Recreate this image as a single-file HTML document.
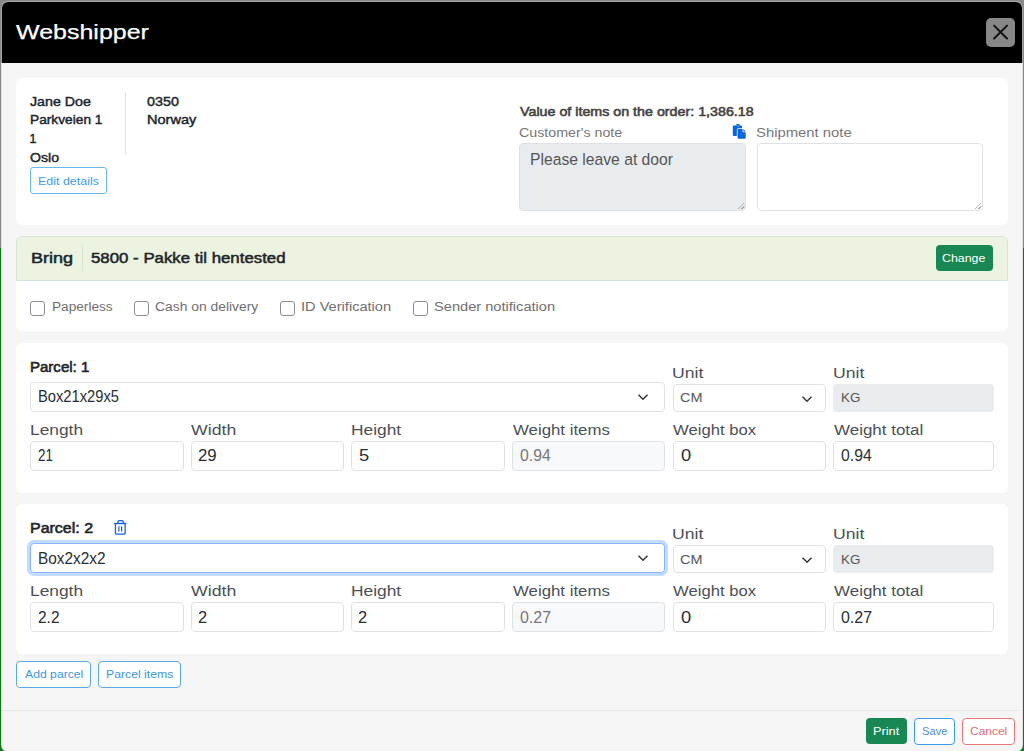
<!DOCTYPE html>
<html><head><meta charset="utf-8"><style>
html,body{margin:0;padding:0;}
body{width:1024px;height:751px;overflow:hidden;position:relative;background:#888;font-family:"Liberation Sans",sans-serif;}
.t{position:absolute;white-space:nowrap;line-height:0;height:0;transform-origin:0 0;}
.b{position:absolute;}
#gl{position:absolute;left:0;top:248px;width:1px;height:503px;background:#0b7a12;}
#gr{position:absolute;left:1023px;top:248px;width:1px;height:503px;background:#0b7a12;}
#gb{position:absolute;left:0;top:740px;width:1024px;height:11px;background:#0b7a12;}
#mo{position:absolute;left:1px;top:1px;width:1022px;height:751px;border-radius:7px;background:linear-gradient(#a6a6a6 0,#a6a6a6 62px,#e0e0e0 62px);}
#mi{position:absolute;left:1px;top:1px;width:1020px;height:749px;border-radius:6px;background:#f5f5f5;overflow:hidden;}
#hd{position:absolute;left:0;top:0;width:1020px;height:61px;background:#000;}
#pg{position:absolute;left:-2px;top:-2px;width:1024px;height:751px;}
</style></head><body>
<div id="gl"></div><div id="gr"></div><div id="gb"></div>
<div id="mo"><div id="mi"><div id="hd"></div><div id="pg">
<div class="t" style="left:16.47px;top:32.09px;font-size:21.09px;color:#fff;-webkit-text-stroke:0.25px #fff;transform:scaleX(1.1857);">Webshipper</div>
<div class="b" style="left:986px;top:18px;width:29px;height:29px;background:#878787;border-radius:5px;"></div>
<svg class="b" style="left:986px;top:18px" width="29" height="29" viewBox="0 0 29 29"><path d="M8.1 7.6L21 20.5M21 7.6L8.1 20.5" stroke="#111" stroke-width="2" stroke-linecap="round"/></svg>
<div class="b" style="left:16px;top:78px;width:992px;height:147px;background:#fff;border-radius:6px;"></div>
<div class="t" style="left:30.19px;top:101.54px;font-size:12.29px;color:#212529;-webkit-text-stroke:0.42px #212529;transform:scaleX(1.1588);">Jane Doe</div>
<div class="t" style="left:30.30px;top:120.34px;font-size:12.29px;color:#212529;-webkit-text-stroke:0.42px #212529;transform:scaleX(1.1175);">Parkveien 1</div>
<div class="t" style="left:29.38px;top:139.24px;font-size:12.29px;color:#212529;-webkit-text-stroke:0.42px #212529;transform:scaleX(1.0000);">1</div>
<div class="t" style="left:30.16px;top:157.54px;font-size:12.29px;color:#212529;-webkit-text-stroke:0.42px #212529;transform:scaleX(1.1482);">Oslo</div>
<div class="t" style="left:146.83px;top:101.54px;font-size:12.29px;color:#212529;-webkit-text-stroke:0.42px #212529;transform:scaleX(1.1694);">0350</div>
<div class="t" style="left:147.14px;top:120.34px;font-size:12.29px;color:#212529;-webkit-text-stroke:0.42px #212529;transform:scaleX(1.1824);">Norway</div>
<div class="b" style="left:125px;top:92px;width:1px;height:63px;background:#dee2e6;"></div>
<div class="b" style="left:30px;top:167px;width:77px;height:27px;border:1px solid #6ab8ec;border-radius:3px;box-sizing:border-box;"></div>
<div class="t" style="left:38.00px;top:180.78px;font-size:11.59px;color:#3d9de6;transform:scaleX(1.0749);">Edit details</div>
<div class="t" style="left:519.73px;top:112.25px;font-size:12.85px;color:#444;-webkit-text-stroke:0.58px #444;transform:scaleX(1.1106);">Value of items on the order: 1,386.18</div>
<div class="t" style="left:518.99px;top:132.60px;font-size:12.71px;color:#777;transform:scaleX(1.1206);">Customer's note</div>
<div class="t" style="left:755.63px;top:132.60px;font-size:12.71px;color:#777;transform:scaleX(1.1678);">Shipment note</div>
<svg class="b" style="left:732px;top:124px" width="15" height="16" viewBox="0 0 15 16"><path d="M1.8 1.5H4.3A1.7 1.7 0 0 1 7.7 1.5H9A1 1 0 0 1 10 2.5V4.3H6.3A1.5 1.5 0 0 0 4.8 5.8V12H1.8A1 1 0 0 1 0.8 11V2.5A1 1 0 0 1 1.8 1.5Z" fill="#0a64dc"/><circle cx="6" cy="2" r="0.6" fill="#fff"/><path d="M5.6 5.1H10.6V8.3H13.7V13.7A1 1 0 0 1 12.7 14.7H6.6A1 1 0 0 1 5.6 13.7Z" fill="#0a64dc"/><path d="M11.4 5.1L13.7 7.5H11.4Z" fill="#0a64dc"/></svg>
<div class="b" style="left:519px;top:143px;width:227px;height:68px;background:#e9ecef;border:1px solid #dee2e6;border-radius:4px;box-sizing:border-box;"></div>
<div class="t" style="left:530.24px;top:159.68px;font-size:15.92px;color:#555;transform:scaleX(0.9860);">Please leave at door</div>
<div class="b" style="left:757px;top:143px;width:226px;height:68px;background:#fff;border:1px solid #dee2e6;border-radius:4px;box-sizing:border-box;"></div>
<svg class="b" style="left:737px;top:202px" width="8" height="8" viewBox="0 0 8 8"><path d="M7 1L1 7" stroke="#aaa" stroke-width="0.9"/><path d="M7 4.5L4.5 7" stroke="#555" stroke-width="1"/></svg>
<svg class="b" style="left:974px;top:202px" width="8" height="8" viewBox="0 0 8 8"><path d="M7 1L1 7" stroke="#aaa" stroke-width="0.9"/><path d="M7 4.5L4.5 7" stroke="#555" stroke-width="1"/></svg>
<div class="b" style="left:16px;top:236px;width:992px;height:95px;background:#fff;border-radius:6px;"></div>
<div class="b" style="left:16px;top:236px;width:992px;height:45px;background:#ecf4e1;border:1px solid #d3e7d9;border-radius:6px 6px 0 0;box-sizing:border-box;"></div>
<div class="t" style="left:31.16px;top:257.72px;font-size:14.94px;color:#212529;-webkit-text-stroke:0.51px #212529;transform:scaleX(1.2069);">Bring</div>
<div class="b" style="left:82px;top:246px;width:1px;height:25px;background:#d5e3d0;"></div>
<div class="t" style="left:90.53px;top:257.72px;font-size:14.94px;color:#212529;-webkit-text-stroke:0.51px #212529;transform:scaleX(1.1263);">5800 - Pakke til hentested</div>
<div class="b" style="left:936px;top:245px;width:57px;height:26px;background:#198754;border-radius:4px;"></div>
<div class="t" style="left:942.38px;top:257.88px;font-size:11.59px;color:#fff;transform:scaleX(1.0691);">Change</div>
<div class="b" style="left:30px;top:301px;width:15px;height:15px;border:1px solid #8d8d8d;border-radius:3px;box-sizing:border-box;background:#fff;"></div>
<div class="t" style="left:51.81px;top:307.25px;font-size:12.85px;color:#6f6f6f;transform:scaleX(1.0622);">Paperless</div>
<div class="b" style="left:134px;top:301px;width:15px;height:15px;border:1px solid #8d8d8d;border-radius:3px;box-sizing:border-box;background:#fff;"></div>
<div class="t" style="left:155.21px;top:307.25px;font-size:12.85px;color:#6f6f6f;transform:scaleX(1.0790);">Cash on delivery</div>
<div class="b" style="left:280px;top:301px;width:15px;height:15px;border:1px solid #8d8d8d;border-radius:3px;box-sizing:border-box;background:#fff;"></div>
<div class="t" style="left:300.88px;top:307.25px;font-size:12.85px;color:#6f6f6f;transform:scaleX(1.1373);">ID Verification</div>
<div class="b" style="left:413px;top:301px;width:15px;height:15px;border:1px solid #8d8d8d;border-radius:3px;box-sizing:border-box;background:#fff;"></div>
<div class="t" style="left:434.04px;top:307.25px;font-size:12.85px;color:#6f6f6f;transform:scaleX(1.1383);">Sender notification</div>
<div class="b" style="left:16px;top:342.6px;width:992px;height:150.0px;background:#fff;border-radius:6px;"></div>
<div class="t" style="left:30.10px;top:366.93px;font-size:15.22px;color:#212529;-webkit-text-stroke:0.61px #212529;transform:scaleX(0.9870);">Parcel: 1</div>
<div class="b" style="left:30px;top:382px;width:635px;height:30px;border:1px solid #dee2e6;border-radius:4px;box-sizing:border-box;background:#fff;"></div>
<div class="t" style="left:38.42px;top:397.13px;font-size:15.78px;color:#2a2e33;transform:scaleX(0.9331);">Box21x29x5</div>
<svg class="b" style="left:637px;top:393px" width="12" height="8" viewBox="0 0 12 8"><path d="M1.5 1.8L6 6.2L10.5 1.8" stroke="#343a40" stroke-width="1.6" fill="none"/></svg>
<div class="t" style="left:671.78px;top:372.93px;font-size:15.22px;color:#4a4f54;transform:scaleX(1.1587);">Unit</div>
<div class="t" style="left:832.58px;top:372.93px;font-size:15.22px;color:#4a4f54;transform:scaleX(1.1587);">Unit</div>
<div class="b" style="left:673px;top:384px;width:153px;height:28px;border:1px solid #dee2e6;border-radius:4px;box-sizing:border-box;background:#fff;"></div>
<div class="t" style="left:679.78px;top:398.25px;font-size:13.13px;color:#555;transform:scaleX(1.0996);">CM</div>
<svg class="b" style="left:801px;top:395px" width="12" height="8" viewBox="0 0 12 8"><path d="M1.5 1.8L6 6.2L10.5 1.8" stroke="#343a40" stroke-width="1.6" fill="none"/></svg>
<div class="b" style="left:833px;top:384px;width:161px;height:28px;background:#e9ecef;border-radius:4px;"></div>
<div class="t" style="left:840.63px;top:398.35px;font-size:13.13px;color:#555;transform:scaleX(1.0215);">KG</div>
<div class="t" style="left:30.01px;top:429.57px;font-size:15.08px;color:#4b5055;transform:scaleX(1.1508);">Length</div>
<div class="b" style="left:30px;top:441px;width:154px;height:30px;border:1px solid #dee2e6;border-radius:4px;box-sizing:border-box;background:#fff;"></div>
<div class="t" style="left:37.63px;top:455.43px;font-size:16.06px;color:#2a2e33;transform:scaleX(0.8342);">21</div>
<div class="t" style="left:191.16px;top:429.57px;font-size:15.08px;color:#4b5055;transform:scaleX(1.1739);">Width</div>
<div class="b" style="left:191px;top:441px;width:153px;height:30px;border:1px solid #dee2e6;border-radius:4px;box-sizing:border-box;background:#fff;"></div>
<div class="t" style="left:198.46px;top:455.43px;font-size:16.06px;color:#2a2e33;transform:scaleX(1.0428);">29</div>
<div class="t" style="left:350.51px;top:429.57px;font-size:15.08px;color:#4b5055;transform:scaleX(1.1510);">Height</div>
<div class="b" style="left:351px;top:441px;width:154px;height:30px;border:1px solid #dee2e6;border-radius:4px;box-sizing:border-box;background:#fff;"></div>
<div class="t" style="left:358.57px;top:455.43px;font-size:16.06px;color:#2a2e33;transform:scaleX(1.1404);">5</div>
<div class="t" style="left:512.72px;top:429.57px;font-size:15.08px;color:#4b5055;transform:scaleX(1.1150);">Weight items</div>
<div class="b" style="left:512px;top:441px;width:153px;height:30px;border:1px solid #dee2e6;border-radius:4px;box-sizing:border-box;background:#f8f9fa;"></div>
<div class="t" style="left:519.67px;top:455.43px;font-size:16.06px;color:#777;transform:scaleX(0.9829);">0.94</div>
<div class="t" style="left:672.72px;top:429.57px;font-size:15.08px;color:#4b5055;transform:scaleX(1.1045);">Weight box</div>
<div class="b" style="left:673px;top:441px;width:153px;height:30px;border:1px solid #dee2e6;border-radius:4px;box-sizing:border-box;background:#fff;"></div>
<div class="t" style="left:680.57px;top:455.43px;font-size:16.06px;color:#2a2e33;transform:scaleX(1.1414);">0</div>
<div class="t" style="left:833.67px;top:429.57px;font-size:15.08px;color:#4b5055;transform:scaleX(1.1254);">Weight total</div>
<div class="b" style="left:833px;top:441px;width:161px;height:30px;border:1px solid #dee2e6;border-radius:4px;box-sizing:border-box;background:#fff;"></div>
<div class="t" style="left:840.67px;top:455.43px;font-size:16.06px;color:#2a2e33;transform:scaleX(0.9829);">0.94</div>
<div class="b" style="left:16px;top:504.0px;width:992px;height:150.0px;background:#fff;border-radius:6px;"></div>
<div class="t" style="left:30.02px;top:528.33px;font-size:15.22px;color:#212529;-webkit-text-stroke:0.61px #212529;transform:scaleX(1.0503);">Parcel: 2</div>
<div class="b" style="left:30px;top:543.4px;width:635px;height:30.0px;border:1px solid #86b7fe;box-shadow:0 0 0 3px #c2dbfe;border-radius:4px;box-sizing:border-box;background:#fff;"></div>
<div class="t" style="left:38.37px;top:558.53px;font-size:15.78px;color:#2a2e33;transform:scaleX(0.9757);">Box2x2x2</div>
<svg class="b" style="left:637px;top:554.4px" width="12" height="8" viewBox="0 0 12 8"><path d="M1.5 1.8L6 6.2L10.5 1.8" stroke="#343a40" stroke-width="1.6" fill="none"/></svg>
<div class="t" style="left:671.78px;top:534.33px;font-size:15.22px;color:#4a4f54;transform:scaleX(1.1587);">Unit</div>
<div class="t" style="left:832.58px;top:534.33px;font-size:15.22px;color:#4a4f54;transform:scaleX(1.1587);">Unit</div>
<div class="b" style="left:673px;top:545.4px;width:153px;height:28.0px;border:1px solid #dee2e6;border-radius:4px;box-sizing:border-box;background:#fff;"></div>
<div class="t" style="left:679.78px;top:559.65px;font-size:13.13px;color:#555;transform:scaleX(1.0996);">CM</div>
<svg class="b" style="left:801px;top:556.4px" width="12" height="8" viewBox="0 0 12 8"><path d="M1.5 1.8L6 6.2L10.5 1.8" stroke="#343a40" stroke-width="1.6" fill="none"/></svg>
<div class="b" style="left:833px;top:545.4px;width:161px;height:28.0px;background:#e9ecef;border-radius:4px;"></div>
<div class="t" style="left:840.63px;top:559.75px;font-size:13.13px;color:#555;transform:scaleX(1.0215);">KG</div>
<div class="t" style="left:30.01px;top:590.97px;font-size:15.08px;color:#4b5055;transform:scaleX(1.1508);">Length</div>
<div class="b" style="left:30px;top:602.4px;width:154px;height:30.0px;border:1px solid #dee2e6;border-radius:4px;box-sizing:border-box;background:#fff;"></div>
<div class="t" style="left:37.52px;top:616.83px;font-size:16.06px;color:#2a2e33;transform:scaleX(0.9653);">2.2</div>
<div class="t" style="left:191.16px;top:590.97px;font-size:15.08px;color:#4b5055;transform:scaleX(1.1739);">Width</div>
<div class="b" style="left:191px;top:602.4px;width:153px;height:30.0px;border:1px solid #dee2e6;border-radius:4px;box-sizing:border-box;background:#fff;"></div>
<div class="t" style="left:198.48px;top:616.83px;font-size:16.06px;color:#2a2e33;transform:scaleX(1.0263);">2</div>
<div class="t" style="left:350.51px;top:590.97px;font-size:15.08px;color:#4b5055;transform:scaleX(1.1510);">Height</div>
<div class="b" style="left:351px;top:602.4px;width:154px;height:30.0px;border:1px solid #dee2e6;border-radius:4px;box-sizing:border-box;background:#fff;"></div>
<div class="t" style="left:358.48px;top:616.83px;font-size:16.06px;color:#2a2e33;transform:scaleX(1.0263);">2</div>
<div class="t" style="left:512.72px;top:590.97px;font-size:15.08px;color:#4b5055;transform:scaleX(1.1150);">Weight items</div>
<div class="b" style="left:512px;top:602.4px;width:153px;height:30.0px;border:1px solid #dee2e6;border-radius:4px;box-sizing:border-box;background:#f8f9fa;"></div>
<div class="t" style="left:519.66px;top:616.83px;font-size:16.06px;color:#777;transform:scaleX(0.9935);">0.27</div>
<div class="t" style="left:672.72px;top:590.97px;font-size:15.08px;color:#4b5055;transform:scaleX(1.1045);">Weight box</div>
<div class="b" style="left:673px;top:602.4px;width:153px;height:30.0px;border:1px solid #dee2e6;border-radius:4px;box-sizing:border-box;background:#fff;"></div>
<div class="t" style="left:680.57px;top:616.83px;font-size:16.06px;color:#2a2e33;transform:scaleX(1.1414);">0</div>
<div class="t" style="left:833.67px;top:590.97px;font-size:15.08px;color:#4b5055;transform:scaleX(1.1254);">Weight total</div>
<div class="b" style="left:833px;top:602.4px;width:161px;height:30.0px;border:1px solid #dee2e6;border-radius:4px;box-sizing:border-box;background:#fff;"></div>
<div class="t" style="left:840.66px;top:616.83px;font-size:16.06px;color:#2a2e33;transform:scaleX(0.9935);">0.27</div>
<svg class="b" style="left:113px;top:520px" width="15" height="16" viewBox="0 0 15 16"><path d="M4.9 3V1.9a1.2 1.2 0 0 1 1.2-1.2h2.9a1.2 1.2 0 0 1 1.2 1.2V3" stroke="#1565d8" stroke-width="1.3" fill="none"/><path d="M1.75 3.4h11" stroke="#1565d8" stroke-width="1.5" stroke-linecap="round"/><path d="M2.45 4v9a1.05 1.05 0 0 0 1.05 1.05h7.6a1.05 1.05 0 0 0 1.05-1.05V4" stroke="#1565d8" stroke-width="1.3" fill="none"/><path d="M5.9 6.2v5.4M8.6 6.2v5.4" stroke="#1565d8" stroke-width="1.2"/></svg>
<div class="b" style="left:16px;top:661px;width:75px;height:27px;border:1px solid #5aaae6;border-radius:4px;box-sizing:border-box;background:#fff;"></div>
<div class="t" style="left:24.80px;top:674.48px;font-size:11.59px;color:#3d97dc;transform:scaleX(1.0538);">Add parcel</div>
<div class="b" style="left:98px;top:661px;width:83px;height:27px;border:1px solid #5aaae6;border-radius:4px;box-sizing:border-box;background:#fff;"></div>
<div class="t" style="left:105.62px;top:674.48px;font-size:11.59px;color:#3d97dc;transform:scaleX(1.0557);">Parcel items</div>
<div class="b" style="left:2px;top:710px;width:1017px;height:1px;background:#e3e5e8;"></div>
<div class="b" style="left:866px;top:718px;width:41px;height:26px;background:#198754;border-radius:4px;"></div>
<div class="t" style="left:873.08px;top:731.18px;font-size:11.59px;color:#fff;transform:scaleX(1.1035);">Print</div>
<div class="b" style="left:914px;top:718px;width:41px;height:27px;border:1px solid #3d9be9;border-radius:4px;box-sizing:border-box;background:#fff;"></div>
<div class="t" style="left:921.70px;top:731.18px;font-size:11.59px;color:#4a90e2;transform:scaleX(0.9651);">Save</div>
<div class="b" style="left:962px;top:718px;width:53px;height:27px;border:1px solid #e87878;border-radius:4px;box-sizing:border-box;background:#fff;"></div>
<div class="t" style="left:970.00px;top:731.18px;font-size:11.59px;color:#e06c75;transform:scaleX(1.0340);">Cancel</div>
</div></div></div>
</body></html>
